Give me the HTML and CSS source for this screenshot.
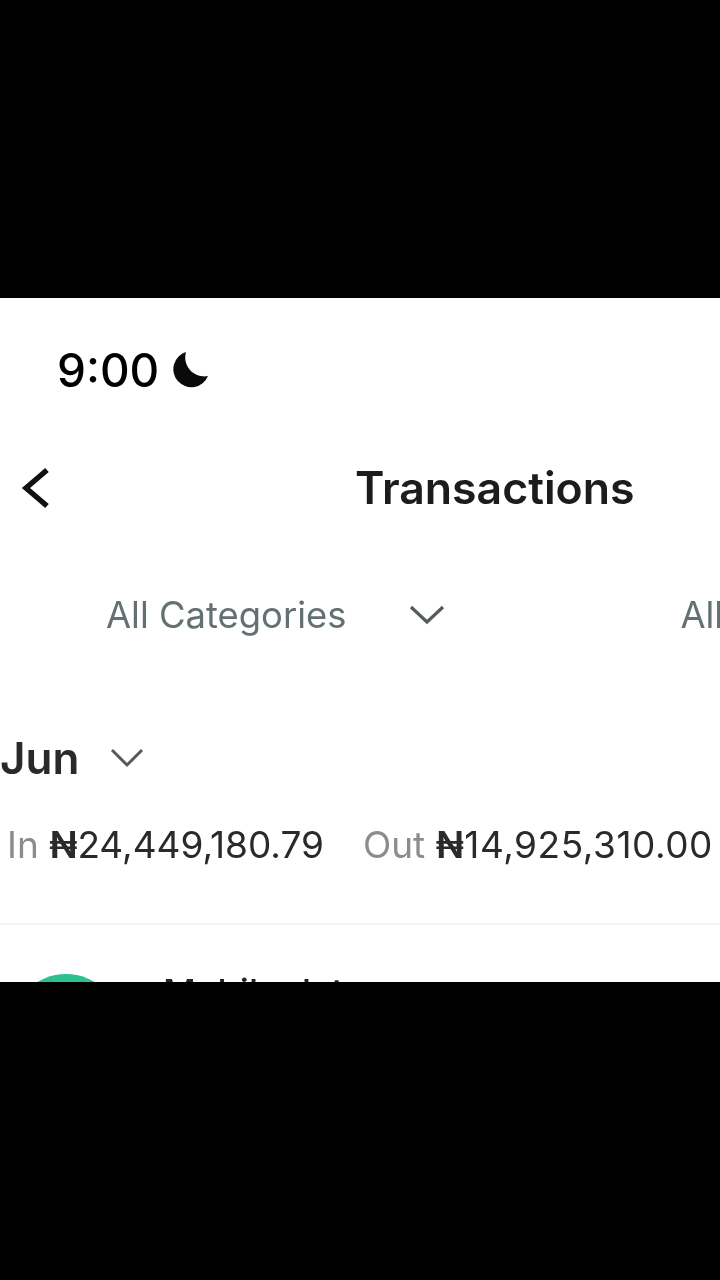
FILE: index.html
```html
<!DOCTYPE html>
<html lang="en">
<head>
    <meta charset="UTF-8">
    <title>Transactions</title>
    <link rel="stylesheet" href="styles.css">
</head>
<body>
    <div class="screen">
        <div class="status">
            <span class="time">9:00</span>
            <svg class="moon" width="38" height="38" viewBox="0 0 38 38"><path d="M15 1 A18 18 0 1 0 37 25 A19 19 0 0 1 15 1Z" fill="#0a0a0a"/></svg>
        </div>
        <div class="nav">
            <svg class="back" width="30" height="44" viewBox="0 0 30 44"><path d="M27 4 L6 22 L27 40" fill="none" stroke="#111" stroke-width="5.4"/></svg>
            <h1>Transactions</h1>
        </div>
        <div class="filters">
            <span class="filter_name">All Categories</span>
            <svg class="arrow" width="36" height="20" viewBox="0 0 36 20"><path d="M2 2 L18 17 L34 2" fill="none" stroke="#555b5a" stroke-width="3.2"/></svg>
            <span class="filter_name second">All</span>
        </div>
        <div class="month">
            <span>Jun</span>
            <svg width="34" height="20" viewBox="0 0 34 20"><path d="M2 2 L17 17 L32 2" fill="none" stroke="#555b5a" stroke-width="3"/></svg>
        </div>
        <div class="totals">
            <span><i>In</i> <b><em>₦</em>24,449,180.79</b></span>
            <span><i>Out</i> <b class="out_value"><em>₦</em>14,925,310.00</b></span>
        </div>
        <div class="row">
            <div class="avatar"></div>
            <div class="row_title">Mobile data</div>
        </div>
    </div>
</body>
</html>
```

FILE: styles.css
```css
*{
    margin:0;
    padding:0;
    box-sizing:border-box;
}
html,body{
    width:720px;
    height:1280px;
    background-color:#000;
    overflow:hidden;
}
body{
    padding-top:298px;
    font-family:"Inter","Liberation Sans",sans-serif;
}
.screen{
    width:720px;
    height:684px;
    background-color:#fff;
    overflow:hidden;
    filter:blur(0.5px);
}
.status{
    display:flex;
    align-items:center;
    gap:12px;
    height:50px;
    margin-top:47px;
    padding-left:57px;
}
.time{
    font-size:46px;
    font-weight:500;
    color:#000;
}
.nav{
    display:flex;
    align-items:center;
    height:60px;
    margin-top:63px;
    padding-left:20px;
}
.nav h1{
    margin-left:305px;
    font-size:44.6px;
    font-weight:600;
    color:#1c1c1c;
    white-space:nowrap;
}
.filters{
    display:flex;
    align-items:center;
    height:50px;
    margin-top:72px;
    padding-left:106px;
    white-space:nowrap;
}
.filter_name{
    flex:none;
    font-size:36.4px;
    color:#647173;
}
.arrow{
    flex:none;
    margin-left:63px;
}
.second{
    margin-left:235px;
}
.month{
    display:flex;
    align-items:center;
    gap:31px;
    height:50px;
    margin-top:93px;
    font-size:44px;
    font-weight:600;
    color:#2a2a2a;
}
.totals{
    display:flex;
    gap:39px;
    height:50px;
    margin-top:37px;
    padding-left:7px;
    font-size:37px;
    line-height:50px;
    white-space:nowrap;
}
.totals i{
    font-style:normal;
    color:#8c8c8c;
}
.totals b{
    font-weight:400;
    color:#2a2a2a;
}
.totals .out_value{
    letter-spacing:0.55px;
}
.totals em{
    font-style:normal;
    font-weight:600;
}
.row{
    display:flex;
    gap:42px;
    height:60px;
    margin-top:53px;
    padding:49px 0 0 11px;
    border-top:2px solid #f3f3f3;
}
.avatar{
    flex:none;
    width:110px;
    height:110px;
    border-radius:50%;
    background-color:#2dbf8e;
}
.row_title{
    font-size:36px;
    line-height:36px;
    font-weight:500;
    color:#222;
    white-space:nowrap;
}
```
